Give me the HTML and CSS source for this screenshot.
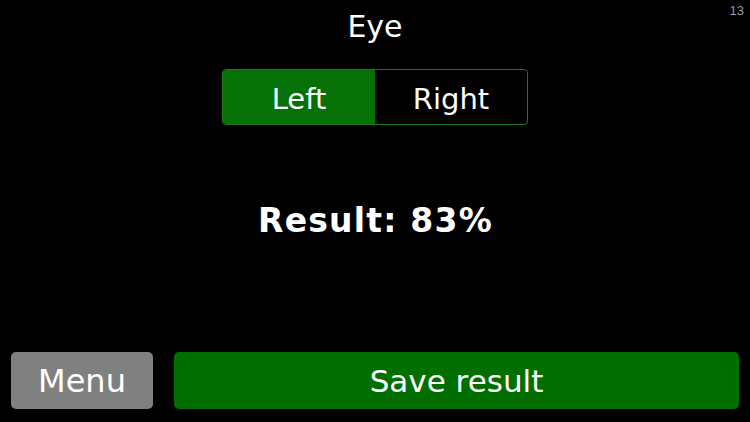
FILE: index.html
```html
<!DOCTYPE html>
<html lang="en">
<head>
<meta charset="utf-8">
<title>Eye</title>
<link rel="stylesheet" href="styles.css">
</head>
<body>
<div class="screen">
  <div class="page-num">13</div>
  <div class="title">Eye</div>
  <div class="segmented">
    <div class="segment selected">Left</div>
    <div class="segment">Right</div>
  </div>
  <div class="result">Result: 83%</div>
  <div class="spacer"></div>
  <div class="actions">
    <div class="btn btn-menu">Menu</div>
    <div class="btn btn-save">Save result</div>
  </div>
</div>
</body>
</html>
```
FILE: styles.css
```css
html, body {
  margin: 0;
  padding: 0;
  background: #000;
}
body {
  width: 750px;
  height: 422px;
  overflow: hidden;
  font-family: "DejaVu Sans", "Liberation Sans", Arial, sans-serif;
  color: #fff;
}
.screen {
  position: relative;
  height: 422px;
  display: flex;
  flex-direction: column;
  align-items: center;
}
.page-num {
  position: absolute;
  top: 3px;
  right: 6px;
  font-family: "Liberation Sans", Arial, sans-serif;
  font-size: 13px;
  line-height: 15px;
  color: #9a9a9a;
}
.title {
  margin-top: 10px;
  font-size: 30px;
  line-height: 34px;
}
.segmented {
  margin-top: 25px;
  width: 306px;
  height: 56px;
  box-sizing: border-box;
  display: flex;
  border: 1px solid #1c7a1c;
  border-radius: 4px;
  overflow: hidden;
}
.segment {
  flex: 1;
  display: flex;
  align-items: center;
  justify-content: center;
  padding-top: 4px;
  font-size: 29px;
}
.segment.selected {
  background: #067106;
}
.result {
  margin-top: 76px;
  font-size: 33px;
  line-height: 40px;
  font-weight: bold;
  letter-spacing: 1.2px;
  padding-left: 1px;
}
.spacer {
  flex: 1;
}
.actions {
  align-self: stretch;
  display: flex;
  gap: 21px;
  padding: 0 11px 13px;
}
.btn {
  height: 57px;
  border-radius: 5px;
  display: flex;
  align-items: center;
  justify-content: center;
}
.btn-menu {
  width: 142px;
  background: #808080;
  font-size: 32px;
}
.btn-save {
  flex: 1;
  background: #006f00;
  font-size: 31px;
}
```
